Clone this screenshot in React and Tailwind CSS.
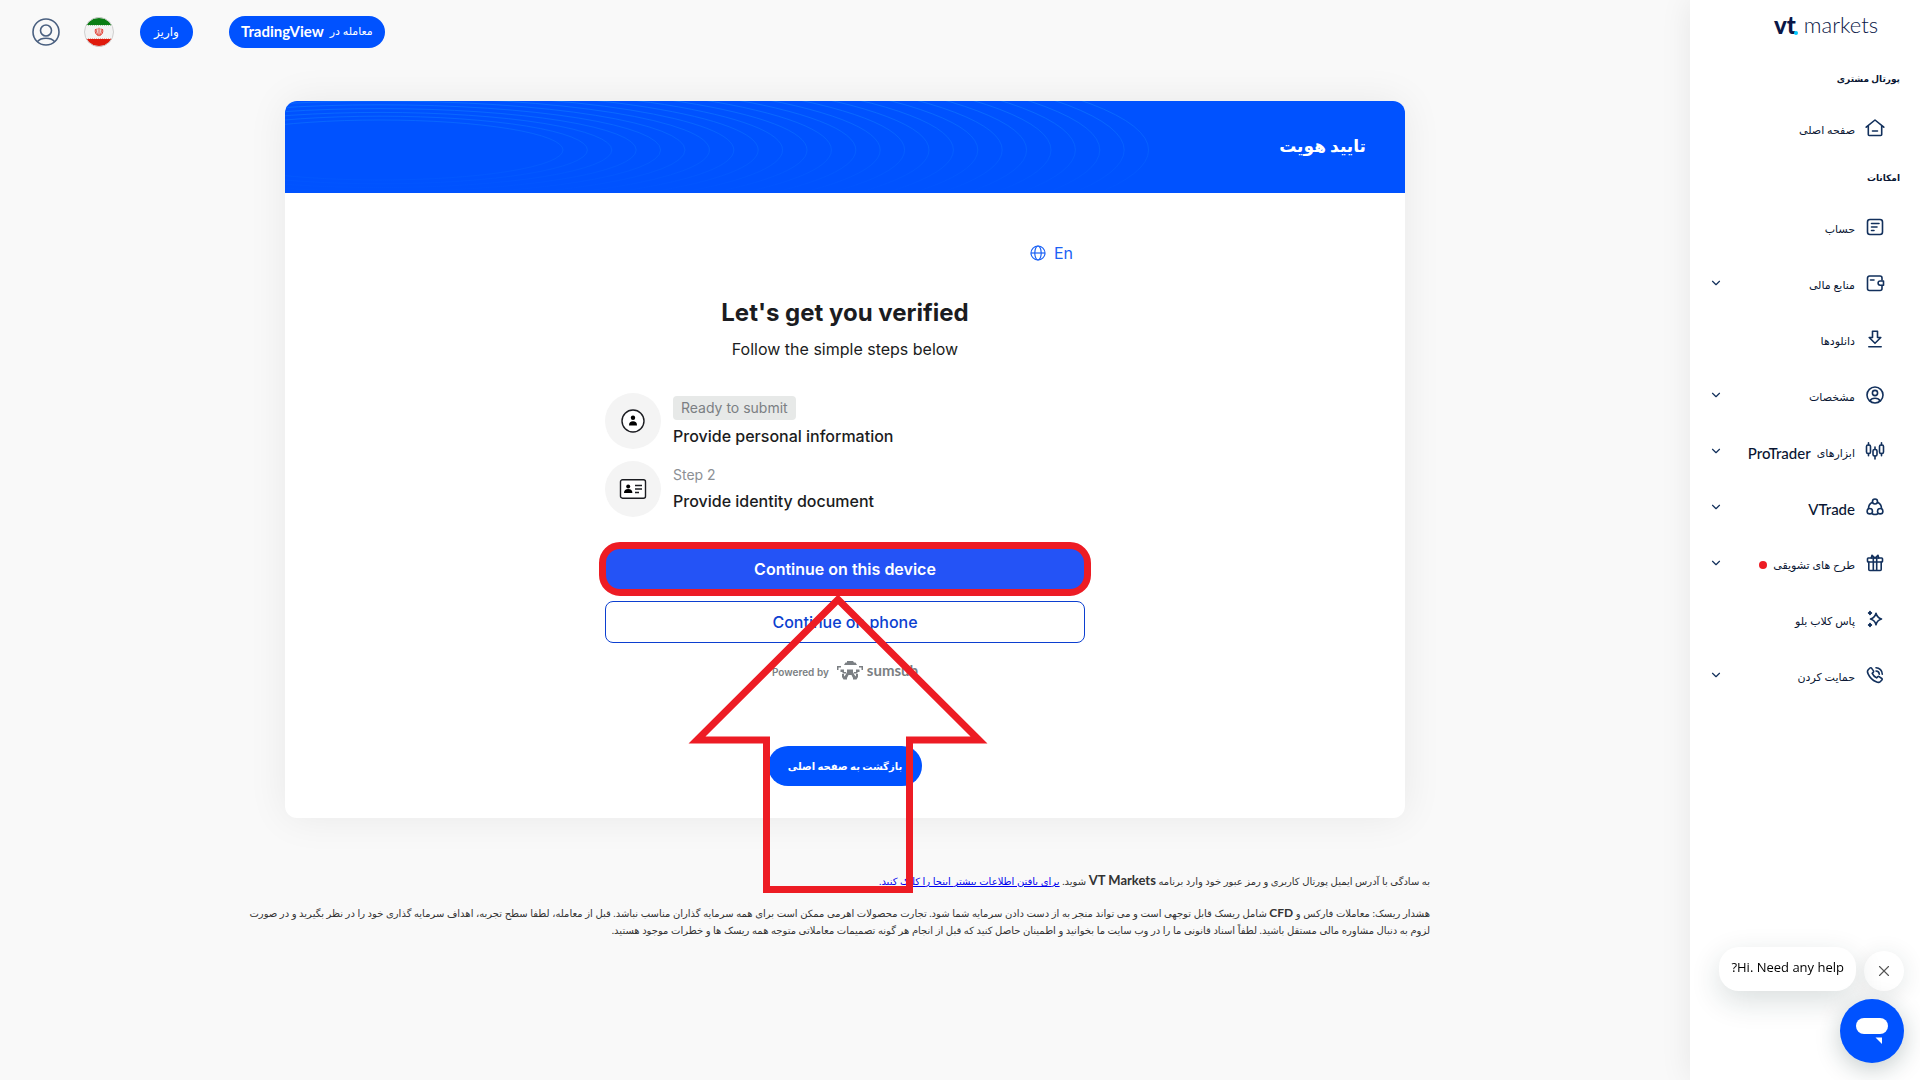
import React from 'react';
import { ChevronDown, X } from 'lucide-react';

const stroke = { fill: 'none', stroke: 'currentColor', strokeWidth: 1.6, strokeLinecap: 'round', strokeLinejoin: 'round' };

// --- SIDEBAR ICONS ---
const icons = {
    home: <path d="M1.2 9.2 10 2l8.800 7.200M3.300 8v8.500a1 1 0 0 0 1 1h11.400a1 1 0 0 0 1-1V8M7.500 13h5" />,
    account: <><rect x="2.500" y="2.500" width="15" height="15" rx="2.500" /><path d="M6.500 6.500h7.500M6.500 10h5.500M6.500 13.500h2.500" /></>,
    wallet: <><path d="M17 7V5a2 2 0 0 0-2-2H4.500a2 2 0 0 0-2 2v10.500a2 2 0 0 0 2 2H15a2 2 0 0 0 2-2v-3M5.500 7H9" /><path d="M18.500 8h-3.300a2 2 0 0 0 0 4.200h3.300z" /></>,
    download: <path d="M7.500 2.200h5v6.300h3.300L10 14.300 4.200 8.500h3.300zM3.800 17.700h12.400" />,
    profile: <><circle cx="10" cy="10" r="8" /><circle cx="10" cy="8" r="2.600" /><path d="M5 16c.8-2 2.700-2.800 5-2.800s4.200.8 5 2.800" /></>,
    candles: <><rect x="1.500" y="4" width="4" height="8.500" rx="1.500" /><rect x="8" y="8.500" width="4" height="6.500" rx="1.500" /><rect x="14.500" y="4" width="4" height="8.500" rx="1.500" /><path d="M3.500 1.800V4M3.500 12.500v2.300M10 6v2.500M10 15v3M16.500 1.800V4M16.500 12.500v2.300" /></>,
    trade: <><circle cx="10" cy="4.500" r="2.500" /><circle cx="4.800" cy="14.200" r="2.700" /><circle cx="15.200" cy="14.200" r="2.700" /><path d="M7.400 5.300C5 6.500 3.500 8.800 3.500 11.500M12.600 5.300c2.400 1.200 3.900 3.500 3.900 6.200M7.500 16.900c1.600.7 3.400.7 5 0" /></>,
    gift: <><rect x="2.500" y="5" width="15" height="4" rx=".8" /><path d="M3.800 9v7.500a1 1 0 0 0 1 1h10.400a1 1 0 0 0 1-1V9M8.300 5v12.500M11.700 5v12.500M10 5 7 2.300M10 5l3-2.700M7 2.300 6.300 5M13 2.300l.7 2.700" /></>,
    sparkle: <><path d="M11 4.200c.8 3.200 2 4.800 5.500 5.800-3.500 1-4.700 2.600-5.500 5.800-.8-3.200-2-4.800-5.500-5.800 3.500-1 4.700-2.600 5.500-5.800z" /><path d="M5 2.800v2.400M3.800 4h2.400M5 14.800v2.400M3.800 16h2.400" strokeWidth="2" /></>,
    phone: <path d="M3.200 4.800 5 3a1 1 0 0 1 1.500.1l2 2.800a1 1 0 0 1-.1 1.200L7.200 8.400c.9 1.900 2.400 3.500 4.400 4.500l1.300-1.200a1 1 0 0 1 1.200-.1l2.700 1.900a1 1 0 0 1 .1 1.500l-1.700 1.700c-1 1-2.600.8-4 .1-3.600-1.600-6.500-4.500-8.100-8-.7-1.400-.9-3 .1-4zM11 6a3.500 3.500 0 0 1 3.300 3.300M11 2.700a6.500 6.500 0 0 1 6.300 6.500" />,
};

const menu = [
    { icon: 'account', label: 'حساب' },
    { icon: 'wallet', label: 'منابع مالی', more: true },
    { icon: 'download', label: 'دانلودها' },
    { icon: 'profile', label: 'مشخصات', more: true },
    { icon: 'candles', label: 'ابزارهای', latin: 'ProTrader', more: true },
    { icon: 'trade', latin: 'VTrade', more: true },
    { icon: 'gift', label: 'طرح های تشویقی', dot: true, more: true },
    { icon: 'sparkle', label: 'پاس کلاب بلو' },
    { icon: 'phone', label: 'حمایت کردن', more: true },
];

const rings = Array.from({ length: 25 }, (_, i) => ({ rx: 183 + i * 24.4, ry: 30 + i * 3.8 }));

function MenuItem({ item }) {
    return (
        <a href="#" className="flex h-14 items-center ps-[35px] pe-[19px] text-[#0a1633]">
            <svg viewBox="0 0 20 20" className="size-5 shrink-0 text-[#12305c]" {...stroke}>{icons[item.icon]}</svg>
            <span className="ms-2.5 flex items-center gap-1.5 pt-1 text-[11px]">
                {item.label}
                {item.latin && <span className="text-[15px] font-medium">{item.latin}</span>}
                {item.dot && <span className="size-2 rounded-full bg-[#ed1c24]" />}
            </span>
            {item.more && <ChevronDown size={14} className="ms-auto text-[#12305c]" />}
        </a>
    );
}

function Sidebar() {
    return (
        <aside className="w-[230px] shrink-0 bg-white shadow-[0_0_30px_rgba(0,0,0,0.08)]">
            <a href="#" dir="ltr" className="flex h-[50px] items-center ps-[84px] text-[#0a1747]" aria-label="vt markets">
                <span className="relative text-[24px] leading-6 font-black">
                    vt
                    <span className="absolute -end-0.5 bottom-0.5 size-1 rounded-full bg-[#00c8ff]" />
                </span>
                <span className="ms-2 text-[22px] leading-6 font-light">markets</span>
            </a>
            <h2 className="flex h-[50px] items-center px-5 pt-2 text-[9px] font-bold text-[#0a1633]">پورتال مشتری</h2>
            <nav>
                <MenuItem item={{ icon: 'home', label: 'صفحه اصلی' }} />
                <h2 className="flex h-[43px] items-center px-5 text-[9px] font-bold text-[#0a1633]">امکانات</h2>
                {menu.map((item) => <MenuItem key={item.icon} item={item} />)}
            </nav>
        </aside>
    );
}

function Topbar() {
    return (
        <header className="flex h-[63px] items-center justify-end pe-8">
            <button className="flex h-8 items-center gap-1.5 rounded-full bg-[#0052ff] px-3 text-[11px] text-white">
                معامله در <span className="text-[15px] font-bold">TradingView</span>
            </button>
            <button className="ms-9 h-8 rounded-full bg-[#0052ff] px-3.5 text-[12px] text-white">واریز</button>
            <button aria-label="فارسی" className="ms-[26px]">
                <svg viewBox="0 0 30 30" className="size-[30px]">
                    <clipPath id="flag"><circle cx="15" cy="15" r="14.500" /></clipPath>
                    <g clipPath="url(#flag)">
                        <path fill="#f3f3f3" d="M0 0h30v30H0z" />
                        <path fill="#0b7d14" d="M0 0h30v8H0z" />
                        <path fill="#e01a0c" d="M0 22h30v8H0z" />
                        <path stroke="#a9c9a9" strokeDasharray="1 1" d="M0 8.500h30" />
                        <path stroke="#eab0aa" strokeDasharray="1 1" d="M0 21.500h30" />
                    </g>
                    <path d="M15 10.800v8.400M13 11.500c-.6 2.500-.5 5 1.500 7M17 11.500c.6 2.500.5 5-1.500 7M11.500 12c-.9 3 .2 5.500 2.500 6.500M18.500 12c.9 3-.2 5.500-2.500 6.500" fill="none" stroke="#e0281c" strokeWidth=".9" />
                    <circle cx="15" cy="15" r="14.500" fill="none" stroke="#cfcfcf" />
                </svg>
            </button>
            <button aria-label="حساب کاربری" className="ms-6 text-[#4a6080]">
                <svg viewBox="0 0 28 28" className="size-7" {...stroke}>
                    <circle cx="14" cy="14" r="13" />
                    <circle cx="14" cy="12.500" r="5.500" />
                    <path d="M5.500 23.500c2-2.300 5-3.200 8.500-3.200s6.500.9 8.500 3.200" />
                </svg>
            </button>
        </header>
    );
}

function Verification() {
    return (
        <section dir="ltr" className="mx-auto flex w-[480px] flex-col pt-12 font-[Inter,sans-serif] text-[#1b1c21]">
            <button className="me-3 flex h-6 items-center gap-2 self-end text-[16px] text-[#1b62f5]">
                <svg viewBox="0 0 16 16" className="size-4" fill="none" stroke="currentColor" strokeWidth="1.2">
                    <circle cx="8" cy="8" r="7" />
                    <ellipse cx="8" cy="8" rx="3.200" ry="7" />
                    <path d="M1 8h14" />
                </svg>
                En
            </button>
            <h2 className="mt-8 text-center text-[24px] leading-8 font-bold">Let's get you verified</h2>
            <p className="mt-2 text-center text-[16px] leading-6">Follow the simple steps below</p>
            <ol className="mt-8 flex flex-col gap-3">
                <li className="flex h-14 items-center gap-3">
                    <span className="flex size-14 items-center justify-center rounded-full bg-[#f4f4f4]">
                        <svg viewBox="0 0 24 24" className="size-6">
                            <circle cx="12" cy="12" r="11" fill="#fff" stroke="#1b1c21" strokeWidth="1.400" />
                            <circle cx="12" cy="8.800" r="2.200" />
                            <path d="M8 16.500c0-3 1.500-4.300 4-4.300s4 1.300 4 4.300z" />
                        </svg>
                    </span>
                    <div className="pt-0.5">
                        <span className="flex h-6 w-fit items-center rounded bg-[#e7e9e8] px-2 pb-0.5 text-[14px] text-[#7b7f83]">Ready to submit</span>
                        <p className="mt-1 text-[16px] leading-6 font-medium">Provide personal information</p>
                    </div>
                </li>
                <li className="flex h-14 items-center gap-3">
                    <span className="flex size-14 items-center justify-center rounded-full bg-[#f4f4f4]">
                        <svg viewBox="0 0 28 20" className="h-5 w-7">
                            <rect x="1.500" y=".8" width="25" height="18.400" rx="2" fill="#fff" stroke="#1b1c21" strokeWidth="1.400" />
                            <circle cx="9.200" cy="7.500" r="2" />
                            <path d="M5 14c0-2.800 1.500-4 4.200-4s4.200 1.200 4.200 4z" />
                            <path d="M16 6.500h7M16 10h7M16 13.500h4" stroke="#1b1c21" strokeWidth="1.300" />
                        </svg>
                    </span>
                    <div>
                        <span className="block text-[14px] leading-5 text-[#8c9095]">Step 2</span>
                        <p className="mt-1 text-[16px] leading-6 font-medium">Provide identity document</p>
                    </div>
                </li>
            </ol>
            <div className="relative mt-[31px]">
                <button className="h-[42px] w-full rounded-lg bg-[#2453f6] text-[16px] font-semibold text-white">Continue on this device</button>
                <span className="pointer-events-none absolute -inset-1.5 rounded-[21px] border-7 border-[#ed1c24]" />
                <svg viewBox="688 595 300 300" className="pointer-events-none absolute top-full left-[83px] z-10 mt-1 size-[300px]">
                    <path d="M838 600.500 697 741h69.500v149.500h143V741H979z" fill="none" stroke="#ed1c24" strokeWidth="7" />
                </svg>
            </div>
            <button className="mt-[11px] h-[42px] rounded-lg border border-[#0c3fd0] text-[16px] font-medium text-[#0c3fd0]">Continue on phone</button>
            <div className="mt-[17px] flex h-5 items-center justify-center gap-2 text-[#7b7f83]">
                <span className="pt-1 text-[10px] font-semibold">Powered by</span>
                <span className="flex items-center gap-1">
                    <svg viewBox="0 0 26 19" className="h-[19px] w-[26px]" fill="currentColor">
                        <path d="M10 0h6l1 1.500h1.500L20 4H7l1.500-2.500H10zM0 5h4v1.500H1.500V9H0zM26 5h-4v1.500h2.500V9H26zM3.500 8.500H7V11h2v1.500H5.500V11h-2zM22.500 8.500H19V11h-2v1.500h3.500V11h2zM10 8.500h6V11l1.500 3 1.500 1.500V13h2v3l-1.500 2.500H16V17l-1.500-3h-3L10 17v1.500H6.500L5 16v-3h2v2.500L8.500 14l1.500-3z" />
                    </svg>
                    <span className="font-[Lato,sans-serif] text-[15px] font-bold">sumsub</span>
                </span>
            </div>
        </section>
    );
}

function ChatWidget() {
    return (
        <div className="fixed right-4 bottom-[17px] flex flex-col items-start gap-2">
            <div className="flex items-end gap-2">
                <button aria-label="بستن" className="flex size-10 items-center justify-center rounded-full bg-white text-[#555] shadow-[0_4px_24px_rgba(20,50,50,0.12)]">
                    <X size={18} strokeWidth={1.5} />
                </button>
                <p className="flex h-11 items-center rounded-[20px] bg-white px-3 pb-0.5 font-['Open_Sans',sans-serif] text-[13px] text-black shadow-[0_10px_30px_rgba(20,50,50,0.16)]">Hi. Need any help?</p>
            </div>
            <button aria-label="گفتگو" className="flex size-16 items-center justify-center rounded-full bg-[#0052ff] shadow-[0_6px_24px_rgba(20,50,50,0.25)]">
                <svg viewBox="0 0 32 28" className="h-7 w-8" fill="#fff">
                    <rect y="1" width="32" height="16" rx="8" />
                    <path d="M19.500 20.500H26V27z" />
                </svg>
            </button>
        </div>
    );
}

export default function App() {
    return (
        <div dir="rtl" className="flex min-h-screen bg-[#f9f9f9] font-[Lato,'DejaVu_Sans',sans-serif]">
            <Sidebar />
            <div className="min-w-0 flex-1">
                <Topbar />
                <main className="mx-auto max-w-[1120px] pt-[38px]">
                    <div className="rounded-xl bg-white pb-8 shadow-[0_0_40px_rgba(0,0,0,0.07)]">
                        <div className="relative flex h-[92px] items-center overflow-hidden rounded-t-xl bg-[#0052ff] px-[39px] pb-0.5">
                            <svg viewBox="0 0 1120 92" className="absolute inset-0 h-full w-full" fill="none">
                                <linearGradient id="ring" x1="0" y1="0" x2="0" y2="92" gradientUnits="userSpaceOnUse">
                                    <stop stopColor="#0a6cff" />
                                    <stop offset="1" stopColor="#0a6cff" stopOpacity="0" />
                                </linearGradient>
                                {rings.map((r) => <ellipse key={r.rx} cx="95" cy="49" rx={r.rx} ry={r.ry} stroke="url(#ring)" />)}
                            </svg>
                            <h1 className="relative text-[17px] font-bold text-white">تایید هویت</h1>
                        </div>
                        <Verification />
                        <div className="mt-[66px] flex justify-center">
                            <button className="h-10 rounded-full bg-[#0052ff] px-5 text-[10px] font-bold text-white">بازگشت به صفحه اصلی</button>
                        </div>
                    </div>
                </main>
                <footer className="mt-[55px] ps-[260px] pe-[248px] text-[10px] leading-[17px] text-[#333]">
                    <p>
                        به سادگی با آدرس ایمیل پورتال کاربری و رمز عبور خود وارد برنامه <span className="text-[13px] leading-none font-bold">VT Markets</span> شوید.{' '}
                        <a href="#" className="text-[#0000ee] underline">برای یافتن اطلاعات بیشتر اینجا را کلیک کنید.</a>
                    </p>
                    <p className="mt-[15px]">
                        هشدار ریسک: معاملات فارکس و <span className="text-[12px] leading-none font-bold">CFD</span> شامل ریسک قابل توجهی است و می تواند منجر به از دست دادن سرمایه شما شود. تجارت محصولات اهرمی ممکن است برای همه سرمایه گذاران مناسب نباشد. قبل از معامله، لطفا سطح تجربه، اهداف سرمایه گذاری خود را در نظر بگیرید و در صورت لزوم به دنبال مشاوره مالی مستقل باشید. لطفاً اسناد قانونی ما را در وب سایت ما بخوانید و اطمینان حاصل کنید که قبل از انجام هر گونه تصمیمات معاملاتی متوجه همه ریسک ها و خطرات موجود هستید.
                    </p>
                </footer>
            </div>
            <ChatWidget />
        </div>
    );
}
